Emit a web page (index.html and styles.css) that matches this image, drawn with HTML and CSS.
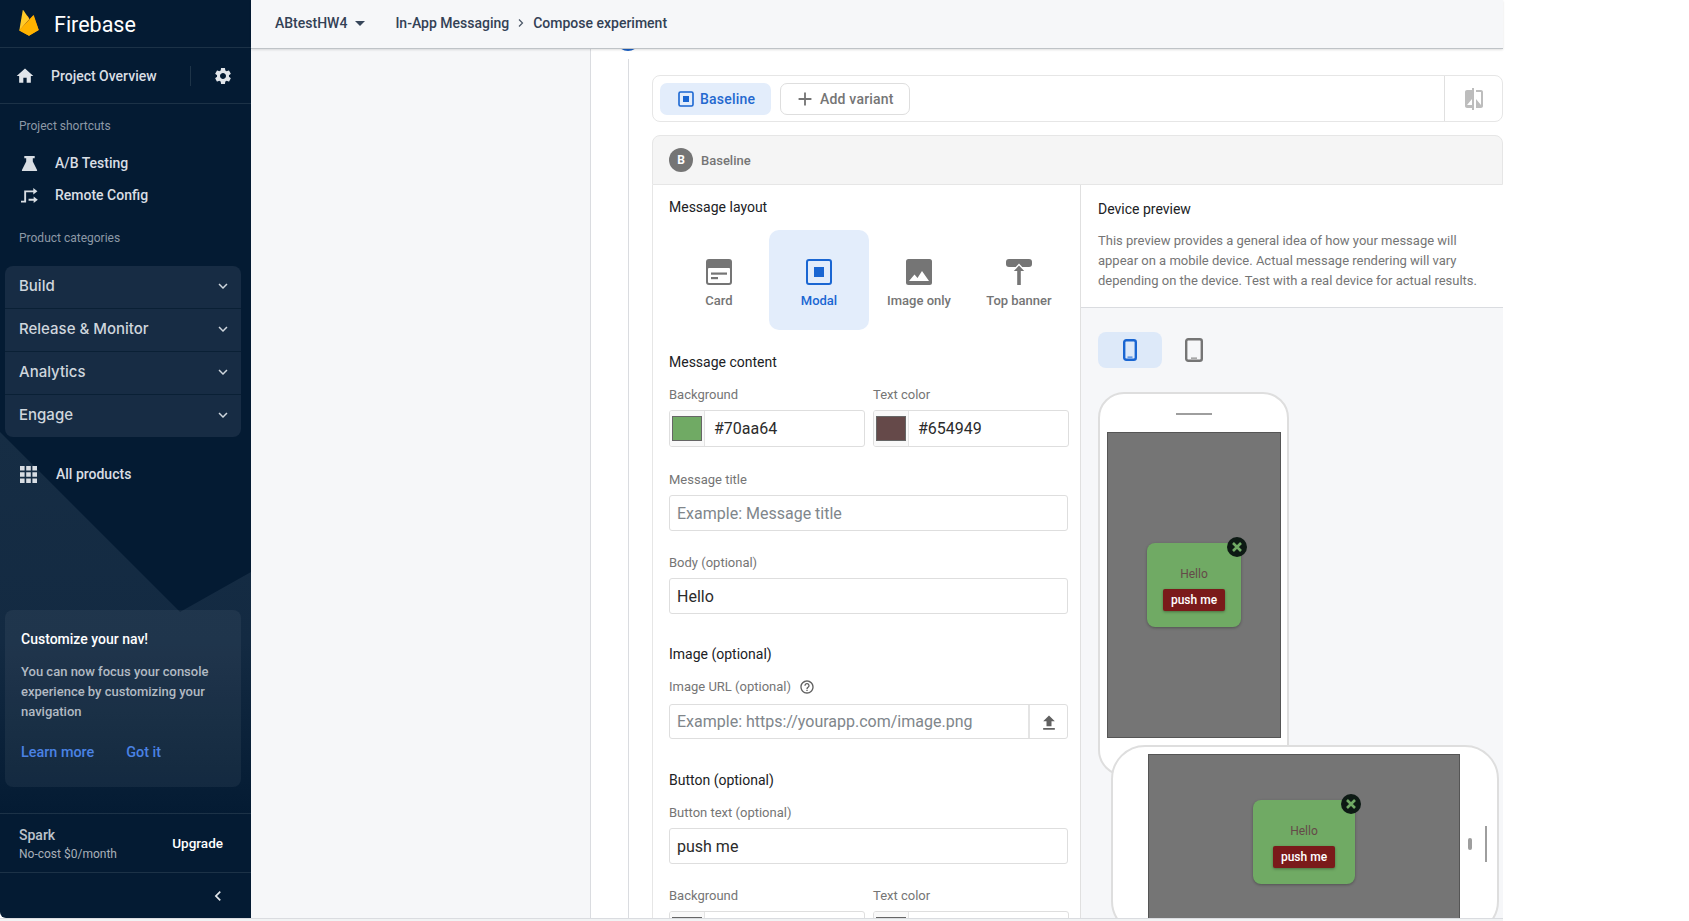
FILE: index.html
```html
<!DOCTYPE html>
<html lang="en">
<head>
<meta charset="utf-8">
<title>Compose experiment</title>
<link rel="stylesheet" href="styles.css">
</head>
<body>
<div class="app">
  <nav class="sidebar">
    <svg class="side-art" viewBox="0 0 251 918" preserveAspectRatio="none">
      <defs><linearGradient id="fade" gradientUnits="userSpaceOnUse" x1="0" y1="432" x2="0" y2="815">
        <stop offset="0" stop-color="#162d44"/><stop offset=".55" stop-color="#132a42"/><stop offset="1" stop-color="#132a42" stop-opacity="0"/>
      </linearGradient></defs>
      <polygon points="0,432 180,612 251,572 251,918 0,918" fill="url(#fade)"/>
    </svg>
    <div class="brand">
      <svg class="flame" viewBox="19 10 20 26"><path fill="#ffa000" d="M19.3 30.4 33 15.5c.3-.3.7-.3.9.1l4.8 14.5-9.7 5.6z"/><path fill="#f57c00" d="M19.3 30.4 29.4 19l-1.9-3.6z"/><path fill="#ffca28" d="M19.3 30.4 22.7 10.6c.1-.5.6-.6.9-.2l5.7 8.6z"/><path fill="#ffb300" d="M19.3 30.4 33.4 15.4l5.3 14.7-9.7 5.6z"/></svg>
      <span class="brand-name">Firebase</span>
    </div>
    <div class="overview">
      <svg class="ic ic-home" viewBox="0 0 24 24"><path d="M10 20v-6h4v6h5v-8h3L12 3 2 12h3v8z"/></svg>
      <span class="overview-text">Project Overview</span>
      <span class="vbar"></span>
      <svg class="ic ic-gear" viewBox="0 0 24 24"><path d="M19.14 12.94c.04-.3.06-.61.06-.94 0-.32-.02-.64-.07-.94l2.03-1.58c.18-.14.23-.41.12-.61l-1.92-3.32c-.12-.22-.37-.29-.59-.22l-2.39.96c-.5-.38-1.03-.7-1.62-.94l-.36-2.54c-.04-.24-.24-.41-.48-.41h-3.84c-.24 0-.43.17-.47.41l-.36 2.54c-.59.24-1.13.57-1.62.94l-2.39-.96c-.22-.08-.47 0-.59.22L2.74 8.87c-.12.21-.08.47.12.61l2.03 1.58c-.05.3-.09.63-.09.94s.02.64.07.94l-2.03 1.58c-.18.14-.23.41-.12.61l1.92 3.32c.12.22.37.29.59.22l2.39-.96c.5.38 1.03.7 1.62.94l.36 2.54c.05.24.24.41.48.41h3.84c.24 0 .44-.17.47-.41l.36-2.54c.59-.24 1.13-.56 1.62-.94l2.39.96c.22.08.47 0 .59-.22l1.92-3.32c.12-.22.07-.47-.12-.61l-2.01-1.58zM12 15.6c-1.98 0-3.6-1.62-3.6-3.6s1.62-3.6 3.6-3.6 3.6 1.62 3.6 3.6-1.62 3.6-3.6 3.6z"/></svg>
    </div>
    <div class="side-label side-label-first">Project shortcuts</div>
    <div class="shortcut">
      <svg class="ic ic-short" viewBox="0 0 18 18"><path d="M3.5 1h11v2.4h-2v3.4L17 16c.3.6 0 1-.7 1H1.7c-.7 0-1-.4-.7-1l4.5-9.2V3.4h-2z"/></svg>
      <span>A/B Testing</span>
    </div>
    <div class="shortcut">
      <svg class="ic ic-short" viewBox="0 0 18 18"><path d="M0 14.5h3.4V3.6h9.6V1l4.4 3.5L13 8V5.6H5.4v10.9H0z"/><path d="M8 12.5h5.4V10l4.4 3.5-4.4 3.5v-2.5H8z"/></svg>
      <span>Remote Config</span>
    </div>
    <div class="side-label side-label-second">Product categories</div>
    <div class="panel">
      <div class="panel-row"><span>Build</span><svg class="ic ic-chev" viewBox="0 0 24 24"><path d="M7.41 8.59 12 13.17l4.59-4.58L18 10l-6 6-6-6z"/></svg></div>
      <div class="panel-row"><span>Release &amp; Monitor</span><svg class="ic ic-chev" viewBox="0 0 24 24"><path d="M7.41 8.59 12 13.17l4.59-4.58L18 10l-6 6-6-6z"/></svg></div>
      <div class="panel-row"><span>Analytics</span><svg class="ic ic-chev" viewBox="0 0 24 24"><path d="M7.41 8.59 12 13.17l4.59-4.58L18 10l-6 6-6-6z"/></svg></div>
      <div class="panel-row"><span>Engage</span><svg class="ic ic-chev" viewBox="0 0 24 24"><path d="M7.41 8.59 12 13.17l4.59-4.58L18 10l-6 6-6-6z"/></svg></div>
    </div>
    <div class="all-products">
      <svg class="ic ic-apps" viewBox="0 0 17 17"><path d="M0 0h4.6v4.6H0zM6.2 0h4.6v4.6H6.2zM12.4 0H17v4.6h-4.6zM0 6.2h4.6v4.6H0zM6.2 6.2h4.6v4.6H6.2zM12.4 6.2H17v4.6h-4.6zM0 12.4h4.6V17H0zM6.2 12.4h4.6V17H6.2zM12.4 12.4H17V17h-4.6z"/></svg>
      <span>All products</span>
    </div>
    <div class="promo">
      <div class="promo-title">Customize your nav!</div>
      <div class="promo-body">You can now focus your console<br>experience by customizing your<br>navigation</div>
      <div class="promo-links"><span>Learn more</span><span>Got it</span></div>
    </div>
    <div class="plan">
      <div class="plan-info"><div class="plan-name">Spark</div><div class="plan-cost">No-cost $0/month</div></div>
      <span class="plan-upgrade">Upgrade</span>
    </div>
    <div class="collapse"><svg class="ic ic-collapse" viewBox="0 0 24 24"><path d="M15.41 7.41 14 6l-6 6 6 6 1.41-1.41L10.83 12z"/></svg></div>
  </nav>

  <div class="main">
    <header class="topbar">
      <span class="project">ABtestHW4</span>
      <span class="caret"></span>
      <span class="crumb">In-App Messaging</span>
      <svg class="crumb-sep" viewBox="0 0 8 12"><path d="M2 2.5 5.5 6 2 9.5" fill="none" stroke="#4a5666" stroke-width="1.2"/></svg>
      <span class="crumb">Compose experiment</span>
    </header>
    <div class="body">
      <div class="left-pane"></div>
      <div class="pane">
        <span class="step-dot"></span>
        <div class="rail"></div>
        <div class="stage">
          <div class="toolbar">
            <div class="chip chip-active">
              <svg class="chip-ic" viewBox="0 0 16 16"><rect x="1" y="1" width="14" height="14" rx="1.5" fill="none" stroke="#1a66d2" stroke-width="1.6"/><rect x="5" y="5" width="6" height="6" fill="#1a66d2"/></svg>
              <span>Baseline</span>
            </div>
            <div class="chip chip-add">
              <svg class="plus" viewBox="0 0 24 24"><path d="M19 13h-6v6h-2v-6H5v-2h6V5h2v6h6v2z"/></svg>
              <span>Add variant</span>
            </div>
            <div class="compare">
              <svg class="compare-ic" viewBox="0 0 24 24"><path d="M10 3H5c-1.1 0-2 .9-2 2v14c0 1.1.9 2 2 2h5v2h2V1h-2v2zm0 15H5l5-6v6zm9-15h-5v2h5v13l-5-6v9h5c1.1 0 2-.9 2-2V5c0-1.1-.9-2-2-2z"/></svg>
            </div>
          </div>
          <section class="variant">
            <div class="variant-head"><span class="badge">B</span><span class="variant-name">Baseline</span></div>
            <div class="variant-body">
              <div class="form">
                <h3 class="form-title">Message layout</h3>
                <div class="tiles">
                  <div class="tile">
                    <svg class="tile-ic" viewBox="0 0 26 26"><rect width="26" height="26" rx="3" fill="#757575"/><rect x="2" y="9" width="22" height="15" rx="1" fill="#fff"/><rect x="5" y="13.5" width="16" height="2.2" fill="#757575"/><rect x="5" y="18" width="7" height="2.2" fill="#757575"/></svg>
                    <span>Card</span>
                  </div>
                  <div class="tile tile-active">
                    <svg class="tile-ic" viewBox="0 0 26 26"><rect x="1" y="1" width="24" height="24" rx="2" fill="none" stroke="#1a66d2" stroke-width="2"/><rect x="8" y="8" width="10" height="10" fill="#1a66d2"/></svg>
                    <span>Modal</span>
                  </div>
                  <div class="tile">
                    <svg class="tile-ic" viewBox="0 0 26 26"><rect width="26" height="26" rx="2.5" fill="#757575"/><path d="M3 22 8.5 15.5l3 3.5 4.5-7 7 10z" fill="#fff"/></svg>
                    <span>Image only</span>
                  </div>
                  <div class="tile">
                    <svg class="tile-ic" viewBox="0 0 26 26"><rect width="26" height="8" rx="3" fill="#757575"/><path d="M6.5 11.5 13 4.5l6.5 7h-4.2V26h-4.6V11.5z" fill="#fff"/><path d="M7.8 12 13 6.6 18.2 12h-3.4v14h-3.6V12z" fill="#757575"/></svg>
                    <span>Top banner</span>
                  </div>
                </div>
                <h3 class="form-title gap-content">Message content</h3>
                <div class="pair gap-label">
                  <div>
                    <label class="lbl">Background</label>
                    <div class="input input-color"><span class="swatch-box"><span class="swatch swatch-green"></span></span><span class="input-val">#70aa64</span></div>
                  </div>
                  <div>
                    <label class="lbl">Text color</label>
                    <div class="input input-color"><span class="swatch-box"><span class="swatch swatch-brown"></span></span><span class="input-val">#654949</span></div>
                  </div>
                </div>
                <label class="lbl gap-field">Message title</label>
                <div class="input"><span class="input-ph">Example: Message title</span></div>
                <label class="lbl gap-field-b">Body (optional)</label>
                <div class="input"><span class="input-val">Hello</span></div>
                <h3 class="form-title gap-section">Image (optional)</h3>
                <div class="lbl lbl-help gap-label"><span>Image URL (optional)</span>
                  <svg class="help" viewBox="0 0 24 24"><path d="M11 18h2v-2h-2v2zm1-16C6.48 2 2 6.48 2 12s4.48 10 10 10 10-4.48 10-10S17.52 2 12 2zm0 18c-4.41 0-8-3.59-8-8s3.59-8 8-8 8 3.59 8 8-3.59 8-8 8zm0-14c-2.21 0-4 1.79-4 4h2c0-1.1.9-2 2-2s2 .9 2 2c0 2-3 1.75-3 5h2c0-2.25 3-2.5 3-5 0-2.21-1.79-4-4-4z"/></svg>
                </div>
                <div class="input input-upload"><span class="input-ph">Example: https://yourapp.com/image.png</span>
                  <span class="upload"><svg class="upload-ic" viewBox="0 0 24 24"><path d="M9 16h6v-6h4l-7-7-7 7h4zm-4 2h14v2H5z"/></svg></span>
                </div>
                <h3 class="form-title gap-section-b">Button (optional)</h3>
                <label class="lbl gap-label">Button text (optional)</label>
                <div class="input"><span class="input-val">push me</span></div>
                <div class="pair gap-field-b">
                  <div>
                    <label class="lbl">Background</label>
                    <div class="input input-color"><span class="swatch-box"><span class="swatch swatch-grey"></span></span></div>
                  </div>
                  <div>
                    <label class="lbl">Text color</label>
                    <div class="input input-color"><span class="swatch-box"><span class="swatch swatch-grey"></span></span></div>
                  </div>
                </div>
              </div>
              <div class="preview">
                <div class="preview-head">
                  <h3 class="form-title">Device preview</h3>
                  <p class="preview-desc">This preview provides a general idea of how your message will<br>appear on a mobile device. Actual message rendering will vary<br>depending on the device. Test with a real device for actual results.</p>
                </div>
                <div class="devices">
                  <div class="device-tabs">
                    <span class="dev-tab dev-tab-active"><svg class="dev-phone" viewBox="0 0 14 22"><rect x="1.2" y="1.2" width="11.6" height="19.6" rx="2" fill="none" stroke="#1a66d2" stroke-width="2.4"/><rect x="4.5" y="17.6" width="5" height="1" fill="#1a66d2"/></svg></span>
                    <span class="dev-tab"><svg class="dev-tablet" viewBox="0 0 18 24"><rect x="1.2" y="1.2" width="15.6" height="21.6" rx="2" fill="none" stroke="#757575" stroke-width="2.4"/><rect x="6" y="19.6" width="6" height="1" fill="#757575"/></svg></span>
                  </div>
                  <div class="phone phone-tall">
                    <span class="speaker"></span>
                    <div class="screen screen-tall">
                      <div class="modal">
                        <span class="modal-close"><svg viewBox="0 0 20 20"><path d="M6 6l8 8M14 6l-8 8" stroke="#70aa64" stroke-width="2.6" fill="none"/></svg></span>
                        <div class="modal-text">Hello</div>
                        <div class="modal-btn">push me</div>
                      </div>
                    </div>
                  </div>
                  <div class="phone phone-wide">
                    <div class="screen screen-wide">
                      <div class="modal modal-wide">
                        <span class="modal-close"><svg viewBox="0 0 20 20"><path d="M6 6l8 8M14 6l-8 8" stroke="#70aa64" stroke-width="2.6" fill="none"/></svg></span>
                        <div class="modal-text">Hello</div>
                        <div class="modal-btn">push me</div>
                      </div>
                    </div>
                    <span class="pill"></span>
                    <span class="side-line"></span>
                  </div>
                </div>
              </div>
            </div>
          </section>
        </div>
      </div>
    </div>
  </div>
</div>
<div class="page-foot"></div>
</body>
</html>
```
FILE: styles.css
```css
* { box-sizing: border-box; }
html, body { margin: 0; padding: 0; height: 921px; overflow: hidden; background: #fff; }
body { font-family: Roboto, "Liberation Sans", sans-serif; font-size: 14px; color: #202124; }
.app { display: flex; width: 1503px; height: 918px; }
.page-foot { width: 1503px; height: 3px; background: #f1f3f4; border-top: 1px solid #dadce0; }

/* sidebar */
.sidebar { position: relative; flex: none; width: 251px; height: 918px; display: flex; flex-direction: column; background: #041b33; color: #e1e5ea; overflow: hidden; border-bottom-left-radius: 6px; }
.sidebar > * { position: relative; }
.sidebar > .side-art { position: absolute; left: 0; top: 0; width: 251px; height: 918px; }
.ic { fill: currentColor; flex: none; display: block; }
.brand { height: 48px; flex: none; display: flex; align-items: center; padding-left: 19px; border-bottom: 1px solid #1c3247; }
.flame { width: 20px; height: 26px; margin-top: -1px; }
.brand-name { margin: 2px 0 0 15px; font-size: 21.5px; line-height: 30px; color: #fff; }
.overview { height: 56px; flex: none; display: flex; align-items: center; padding-left: 15px; border-bottom: 1px solid #1c3247; }
.ic-home { width: 20px; height: 20px; }
.overview-text { margin-left: 16px; font-weight: 500; width: 139px; color: #d9dee4; }
.vbar { width: 1px; height: 20px; background: #1e3448; }
.ic-gear { width: 20px; height: 20px; margin-left: 22px; }
.side-label { font-size: 12px; line-height: 20px; color: #8d99a6; padding-left: 19px; }
.side-label-first { margin: 12px 0 11px; }
.side-label-second { margin: 17px 0 18px; }
.shortcut { height: 32px; flex: none; display: flex; align-items: center; padding-left: 21px; font-weight: 500; color: #d9dee4; }
.ic-short { width: 17px; height: 17px; margin-right: 17px; }
.panel { flex: none; margin: 0 10px 0 5px; background: #172c44; border-radius: 8px; }
.panel-row { height: 43px; display: flex; align-items: center; justify-content: space-between; padding: 0 9px 4px 14px; font-family: Inter, Roboto, sans-serif; font-size: 15px; font-weight: 500; color: #cfd6dd; border-bottom: 1px solid #0a2035; }
.panel-row:last-child { height: 42px; border-bottom: 0; }
.ic-chev { width: 18px; height: 18px; margin-top: 2px; }
.all-products { height: 32px; flex: none; margin-top: 21px; display: flex; align-items: center; padding-left: 20px; font-weight: 500; color: #d9dee4; }
.ic-apps { width: 17px; height: 17px; margin-right: 19px; }
.promo { flex: none; margin: auto 10px 26px 5px; height: 177px; padding: 19px 16px 0; border-radius: 8px; background: rgba(255,255,255,.055); }
.promo-title { font-weight: 500; line-height: 20px; color: #fff; }
.promo-body { margin-top: 13px; font-size: 13px; font-weight: 500; line-height: 20px; color: #b2bac3; }
.promo-links { margin-top: 21px; display: flex; gap: 32px; font-size: 14.4px; font-weight: 500; line-height: 20px; color: #4a82e4; }
.plan { height: 60px; flex: none; display: flex; align-items: center; justify-content: space-between; padding: 0 28px 0 19px; border-top: 1px solid #1c3247; border-bottom: 1px solid #1c3247; }
.plan-name { font-weight: 500; line-height: 20px; color: #bcc3cb; }
.plan-cost { margin-top: 1px; font-size: 12px; line-height: 16px; color: #a8b0b9; }
.plan-upgrade { font-size: 13.5px; font-weight: 500; color: #fff; }
.collapse { height: 45px; flex: none; display: flex; align-items: center; justify-content: flex-end; padding-right: 23px; }
.ic-collapse { width: 20px; height: 20px; }

/* main */
.main { flex: 1; min-width: 0; display: flex; flex-direction: column; }
.topbar { position: relative; z-index: 2; height: 49px; flex: none; display: flex; align-items: center; padding: 0 0 3px 24px; background: #f6f7f9; border-bottom: 1px solid #bfc3c7; box-shadow: 0 1px 2px rgba(0,0,0,.12); font-weight: 500; color: #334155; }
.caret { width: 0; height: 0; margin: 2px 0 0 8px; border: 5px solid transparent; border-top-color: #37465a; border-bottom: 0; }
.crumb { color: #334155; }
.caret + .crumb { margin-left: 30px; }
.crumb-sep { width: 8px; height: 12px; margin: 1px 8px 0 8px; }
.body { flex: 1; min-height: 0; display: flex; }
.left-pane { flex: none; width: 340px; background: #f6f7f9; border-right: 1px solid #dadce0; }
.pane { position: relative; flex: 1; min-width: 0; display: flex; padding-left: 37px; overflow: hidden; background: #fff; }
.step-dot { position: absolute; left: 25px; top: -22px; width: 24px; height: 24px; border-radius: 50%; background: #1a5fc4; }
.rail { flex: none; width: 24px; margin-top: 10px; border-left: 1px solid #dadce0; }
.stage { flex: 1; min-width: 0; padding-top: 26px; }

.toolbar { height: 47px; display: flex; align-items: center; padding-left: 7px; border: 1px solid #e6e6e6; border-radius: 8px; }
.chip { height: 32px; display: flex; align-items: center; border-radius: 7px; font-weight: 500; letter-spacing: .2px; }
.chip-active { width: 111px; padding-left: 18px; background: #e3edfb; color: #2468cf; }
.chip-ic { width: 16px; height: 16px; margin-right: 6px; }
.chip-add { width: 130px; margin-left: 9px; padding-left: 13px; border: 1px solid #dedede; color: #757575; }
.plus { width: 22px; height: 22px; margin-right: 4px; fill: #757575; }
.compare { margin-left: auto; width: 58px; align-self: stretch; display: flex; align-items: center; justify-content: center; border-left: 1px solid #e0e0e0; }
.compare-ic { width: 24px; height: 24px; fill: #bdbdbd; }

.variant { margin-top: 13px; }
.variant-head { height: 50px; display: flex; align-items: center; padding-left: 16px; background: #f5f5f5; border: 1px solid #e6e6e6; border-radius: 8px 8px 0 0; }
.badge { width: 24px; height: 24px; display: flex; align-items: center; justify-content: center; border-radius: 50%; background: #757575; color: #fff; font-size: 12px; font-weight: 700; }
.variant-name { margin-left: 8px; font-size: 13px; font-weight: 500; color: #757575; }
.variant-body { display: flex; }
.form { flex: none; width: 429px; height: 760px; padding: 12px 12px 0 16px; border-left: 1px solid #e6e6e6; border-right: 1px solid #e0e0e0; }
.form-title { margin: 0; font-size: 14px; font-weight: 400; line-height: 20px; color: #202124; }
.tiles { display: grid; grid-template-columns: repeat(4, 100px); margin-top: 13px; }
.tile { height: 100px; display: flex; flex-direction: column; align-items: center; padding-top: 29px; border-radius: 10px; font-size: 13px; font-weight: 500; color: #757575; }
.tile-active { background: #e3edfb; color: #1a66d2; }
.tile-ic { width: 26px; height: 26px; margin-bottom: 8px; }
.tile span { line-height: 16px; }
.gap-content { margin-top: 22px; }
.gap-label { margin-top: 13px; }
.gap-field { margin-top: 23px; }
.gap-field-b { margin-top: 22px; }
.gap-section { margin-top: 30px; }
.gap-section-b { margin-top: 31px; }
.lbl { display: block; font-size: 13px; line-height: 20px; color: #757575; }
.lbl-help { display: flex; align-items: center; }
.help { width: 16px; height: 16px; margin-left: 8px; fill: #616161; }
.pair { display: grid; grid-template-columns: 196px 196px; gap: 8px; }
.input { height: 36px; margin-top: 5px; display: flex; align-items: center; padding-left: 7px; border: 1px solid #dedede; border-radius: 3px; background: #fff; font-size: 16px; overflow: hidden; }
.input-val { color: #2b2b2b; }
.input-ph { color: #80868b; }
.input-color { height: 37px; padding-left: 0; }
.swatch-box { flex: none; width: 35px; align-self: stretch; padding: 5px 2px; border-right: 1px solid #e4e4e4; background: #f9f9f9; }
.swatch { display: block; height: 100%; border: 1px solid #666; }
.swatch-green { background: #70aa64; }
.swatch-brown { background: #654949; }
.swatch-grey { background: #d9d9d9; }
.input-color .input-val { margin-left: 9px; }
.input-upload { margin-top: 7px; height: 35px; padding-right: 0; }
.upload { margin-left: auto; width: 39px; align-self: stretch; display: flex; align-items: center; justify-content: center; border-left: 2px solid #e4e4e4; }
.upload-ic { width: 20px; height: 20px; fill: #616161; margin-top: 2px; }

.preview { flex: 1; min-width: 0; }
.preview-head { padding: 14px 0 0 17px; border-bottom: 1px solid #dadce0; background: #fff; height: 123px; }
.preview-desc { margin: 12px 0 0; font-size: 13px; line-height: 20px; color: #757575; white-space: nowrap; }
.devices { height: 640px; padding: 24px 0 0 17px; background: #f6f7f9; }
.device-tabs { display: flex; }
.dev-tab { width: 64px; height: 36px; display: flex; align-items: center; justify-content: center; border-radius: 8px; }
.dev-tab-active { background: #dde9f9; }
.dev-phone { width: 14px; height: 22px; }
.dev-tablet { width: 18px; height: 24px; }
.phone { background: #fff; border: 2px solid #dedede; }
.phone-tall { width: 191px; height: 384px; margin-top: 24px; padding-top: 19px; border-radius: 26px; display: flex; flex-direction: column; }
.speaker { flex: none; width: 36px; height: 2px; margin: 0 auto 17px; background: #9e9e9e; }
.screen { flex: none; display: flex; align-items: center; justify-content: center; background: #757575; border: 1px solid #555; }
.screen-tall { width: 174px; height: 306px; margin-left: 7px; }
.phone-wide { position: relative; width: 388px; height: 190px; margin: -31px 0 0 13px; padding-top: 7px; border-radius: 34px; display: flex; align-items: flex-start; }
.screen-wide { width: 312px; height: 176px; margin-left: 35px; }
.modal { position: relative; width: 94px; height: 84px; padding-top: 24px; display: flex; flex-direction: column; align-items: center; border-radius: 8px; background: #70aa64; box-shadow: 0 1px 3px rgba(0,0,0,.3); }
.modal-wide { width: 102px; }
.modal-close { position: absolute; right: -6px; top: -6px; width: 20px; height: 20px; border-radius: 50%; background: #0d1a14; }
.modal-close svg { display: block; width: 20px; height: 20px; }
.modal-text { font-size: 12px; line-height: 14px; color: #654949; }
.modal-btn { width: 62px; height: 22px; margin-top: 8px; display: flex; align-items: center; justify-content: center; border-radius: 2px; background: #7a1a1a; color: #fff; font-size: 12px; font-weight: 500; box-shadow: 0 1px 3px rgba(0,0,0,.35); }
.pill { flex: none; align-self: center; width: 4px; height: 12px; margin-left: 8px; border-radius: 2px; background: #9e9e9e; }
.side-line { flex: none; align-self: center; width: 2px; height: 36px; margin-left: 13px; background: #9e9e9e; }
```
